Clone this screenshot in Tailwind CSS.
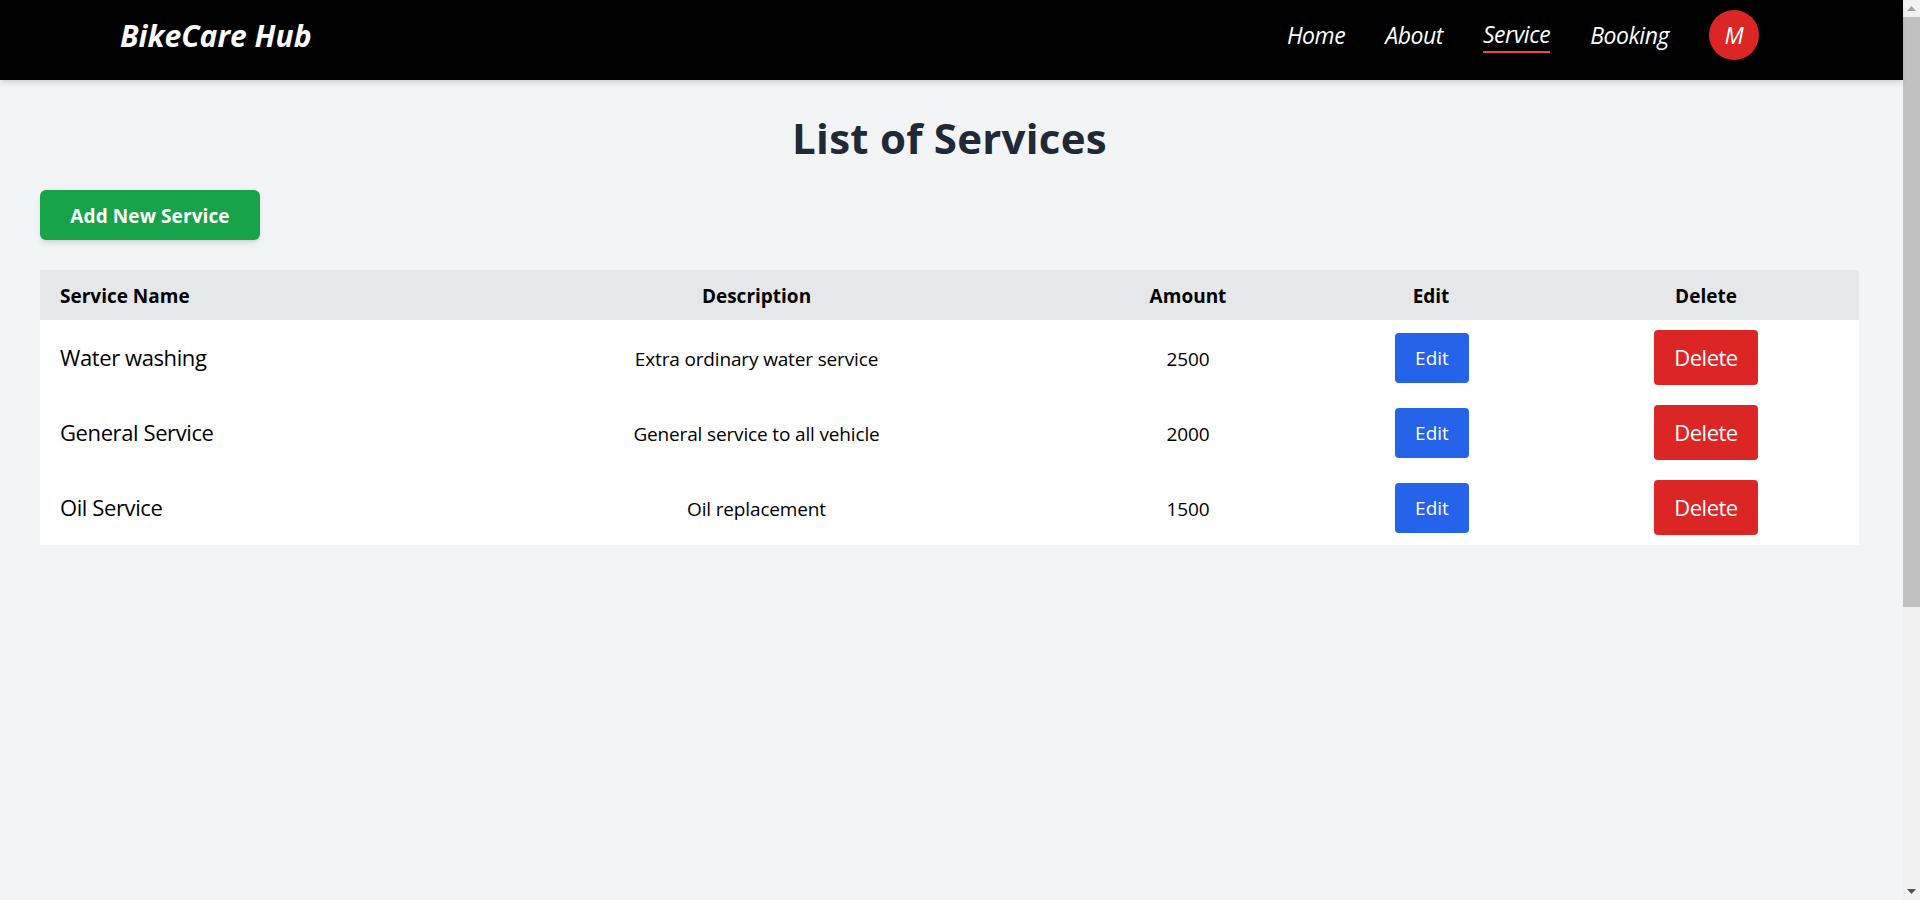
<!DOCTYPE html>
<html lang="en">
<head>
    <meta charset="UTF-8">
    <meta name="viewport" content="width=device-width, initial-scale=1.0">
    <title>BikeCare Hub</title>
    <script src="https://cdn.jsdelivr.net/npm/@tailwindcss/browser@4"></script>
</head>
<body class="overflow-hidden font-['Open_Sans',sans-serif]">
    <div class="flex h-[900px] w-[1920px]">
        <div class="w-[1903px] h-full bg-[#f3f4f6]">
            <!-- navbar -->
            <nav class="h-20 bg-black shadow-md flex items-center justify-between pl-[120px] pr-[144px] pb-[10px] relative">
                <a class="text-white text-[30px] font-bold italic">BikeCare Hub</a>
                <div class="flex items-center gap-10 text-white text-[23px] italic tracking-[-0.45px]">
                    <a>Home</a>
                    <a>About</a>
                    <a class="border-b-2 border-[#ef4444] leading-[32px] pb-[1px]">Service</a>
                    <a>Booking</a>
                    <div class="w-[50px] h-[50px] rounded-full bg-[#dc2626] flex items-center justify-center">M</div>
                </div>
            </nav>

            <main class="pl-10 pr-[44px]">
                <h1 class="text-[42px] leading-[50px] font-bold text-[#1f2937] text-center pt-[33px] tracking-[0.25px]">List of Services</h1>
                <button class="mt-[27px] w-[220px] h-[50px] pt-[2px] rounded-md bg-[#16a34a] text-white text-[19px] font-bold shadow-md tracking-[0.1px]">Add New Service</button>

                <table class="mt-[30px] w-[1819px] table-fixed bg-white text-black">
                    <colgroup>
                        <col class="w-[406px]">
                        <col class="w-[621px]">
                        <col class="w-[242px]">
                        <col class="w-[244px]">
                        <col class="w-[306px]">
                    </colgroup>
                    <thead class="bg-[#e5e7eb] text-[19px]">
                        <tr class="h-[50px]">
                            <th class="pl-5 pt-[2px] text-left font-bold">Service Name</th>
                            <th class="pt-[2px] font-bold">Description</th>
                            <th class="pt-[2px] font-bold">Amount</th>
                            <th class="pt-[2px] font-bold">Edit</th>
                            <th class="pt-[2px] font-bold">Delete</th>
                        </tr>
                    </thead>
                    <tbody class="text-center text-[19px] tracking-[-0.15px]">
                        <tr class="h-[75px]">
                            <td class="pl-5 text-left text-[22px] tracking-[-0.4px]">Water washing</td>
                            <td class="pt-[3px]">Extra ordinary water service</td>
                            <td class="pt-[3px]">2500</td>
                            <td class="pl-[2px]"><button class="w-[74px] h-[50px] pt-[2px] rounded bg-[#2563eb] text-white text-[19px] tracking-normal">Edit</button></td>
                            <td><button class="w-[104px] h-[55px] rounded bg-[#dc2626] text-white text-[22px] tracking-[-0.5px]">Delete</button></td>
                        </tr>
                        <tr class="h-[75px]">
                            <td class="pl-5 text-left text-[22px] tracking-[-0.4px]">General Service</td>
                            <td class="pt-[3px]">General service to all vehicle</td>
                            <td class="pt-[3px]">2000</td>
                            <td class="pl-[2px]"><button class="w-[74px] h-[50px] pt-[2px] rounded bg-[#2563eb] text-white text-[19px] tracking-normal">Edit</button></td>
                            <td><button class="w-[104px] h-[55px] rounded bg-[#dc2626] text-white text-[22px] tracking-[-0.5px]">Delete</button></td>
                        </tr>
                        <tr class="h-[75px]">
                            <td class="pl-5 text-left text-[22px] tracking-[-0.4px]">Oil Service</td>
                            <td class="pt-[3px]">Oil replacement</td>
                            <td class="pt-[3px]">1500</td>
                            <td class="pl-[2px]"><button class="w-[74px] h-[50px] pt-[2px] rounded bg-[#2563eb] text-white text-[19px] tracking-normal">Edit</button></td>
                            <td><button class="w-[104px] h-[55px] rounded bg-[#dc2626] text-white text-[22px] tracking-[-0.5px]">Delete</button></td>
                        </tr>
                    </tbody>
                </table>
            </main>
        </div>

        <!-- scrollbar -->
        <div class="w-[17px] h-full bg-[#f1f1f1] flex flex-col">
            <div class="h-[17px] flex items-center justify-center">
                <svg width="9" height="5" viewBox="0 0 9 5"><path d="M4.5 0L9 5H0z" fill="#a3a3a3"/></svg>
            </div>
            <div class="h-[590px] bg-[#c1c1c1]"></div>
            <div class="flex-1"></div>
            <div class="h-[17px] flex items-center justify-center">
                <svg width="9" height="5" viewBox="0 0 9 5"><path d="M0 0H9L4.5 5z" fill="#505050"/></svg>
            </div>
        </div>
    </div>
</body>
</html>
